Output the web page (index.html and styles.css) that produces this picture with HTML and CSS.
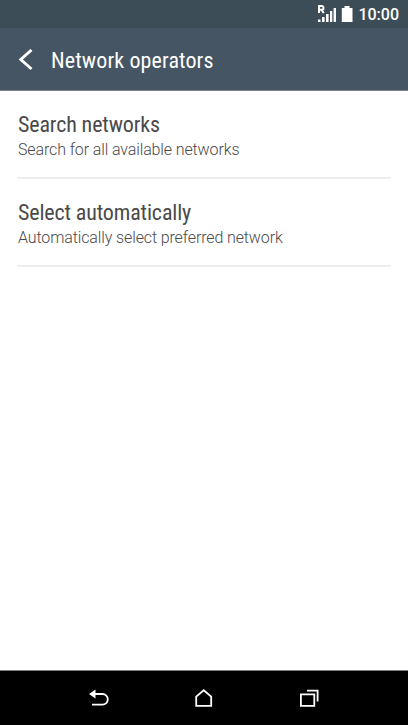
FILE: index.html
```html
<!DOCTYPE html>
<html lang="en">
<head>
    <meta charset="UTF-8">
    <meta name="viewport" content="width=device-width, initial-scale=1">
    <title>Network operators</title>
    <link rel="stylesheet" href="styles.css">
</head>
<body>
<!-- Status bar -->
<div class="status-bar">
    <svg class="signal" width="20" height="18" viewBox="0 0 20 18">
      <path d="M2 8V1h2.6a1.7 1.7 0 0 1 0 3.8H2M4.4 4.8L6.8 8" fill="none" stroke="#fff" stroke-width="2"/>
      <path d="M1 14.5h2.5V17H1zM5 12h2.6v5H5zM9 9h2.6v8H9zM13 6h2.3v11H13zM16.6 3H19v14h-2.4z" fill="#fff"/>
    </svg>
    <svg class="battery" width="12" height="18" viewBox="0 0 12 18">
      <path d="M3.5 1h5v2h3v14H.8V3h2.7z" fill="#fff"/>
    </svg>
    <span class="clock">10:00</span>
</div>

<header>
    <svg class="back" width="16" height="22" viewBox="0 0 16 22">
      <path d="M14.5 1L3.8 10.5L14.5 20" fill="none" stroke="#fff" stroke-width="2.9"/>
    </svg>
    <h1>Network operators</h1>
</header>

<!-- Settings list -->
<main>
    <div class="item">
      <h2>Search networks</h2>
      <p>Search for all available networks</p>
    </div>
    <div class="item">
      <h2>Select automatically</h2>
      <p>Automatically select preferred network</p>
    </div>
</main>

<!-- Navigation buttons -->
<nav>
    <svg width="22" height="22" viewBox="0 0 22 22">
      <path d="M6 7h8.5a5.2 5.2 0 0 1 0 10.6H4" fill="none" stroke="#fff" stroke-width="1.8"/>
      <path d="M1 7L7.5 2.5v9z" fill="#fff"/>
    </svg>
    <svg width="22" height="22" viewBox="0 0 22 22">
      <path d="M3.2 9.6L10.7 3.2l7.5 6.4v9.2H3.2z" fill="none" stroke="#fff" stroke-width="1.8"/>
    </svg>
    <svg width="22" height="22" viewBox="0 0 22 22">
      <path d="M2.9 7.4h13.4v11.4H2.9zM9 3.6h10.6v11" fill="none" stroke="#fff" stroke-width="1.8"/>
    </svg>
</nav>
</body>
</html>
```
FILE: styles.css
```css
* { box-sizing: border-box; }
body {
  margin: 0;
  height: 100vh;
  display: flex;
  flex-direction: column;
  font-family: Roboto, sans-serif;
  background: #fff;
  color: #4a4a4a;
}
.status-bar {
  height: 28px;
  padding: 0 9px 0 0;
  display: flex;
  align-items: center;
  justify-content: flex-end;
  background: #3d4d57;
  color: #fff;
}
.battery { margin: 0 5px 0 4px; }
.clock {
  font-size: 16px;
  font-weight: 500;
  line-height: 28px;
  padding-top: 2px;
}
header {
  height: 63px;
  padding: 1px 0 0 17px;
  display: flex;
  align-items: center;
  background: #455563;
  border-bottom: 1px solid #7b8490;
  color: #fff;
}
h1 {
  margin: 2px 0 0 18px;
  font-size: 22px;
  font-weight: 400;
  font-stretch: 75%;
  line-height: 28px;
  letter-spacing: 0.12px;
}
main {
  flex: 1;
  padding: 0 17px;
}
.item {
  height: 88px;
  padding: 20px 1px 0;
  border-bottom: 2px solid #ededed;
}
.item h2 {
  margin: 0;
  font-size: 22px;
  font-weight: 400;
  font-stretch: 75%;
  line-height: 28px;
  letter-spacing: -0.14px;
}
.item p {
  margin: 0;
  font-size: 16px;
  font-weight: 300;
  line-height: 22px;
  letter-spacing: -0.12px;
}
nav {
  height: 55px;
  display: flex;
  align-items: center;
  justify-content: center;
  gap: 83px;
  background: #000;
  border-top: 1px solid #7c8182;
}
```
